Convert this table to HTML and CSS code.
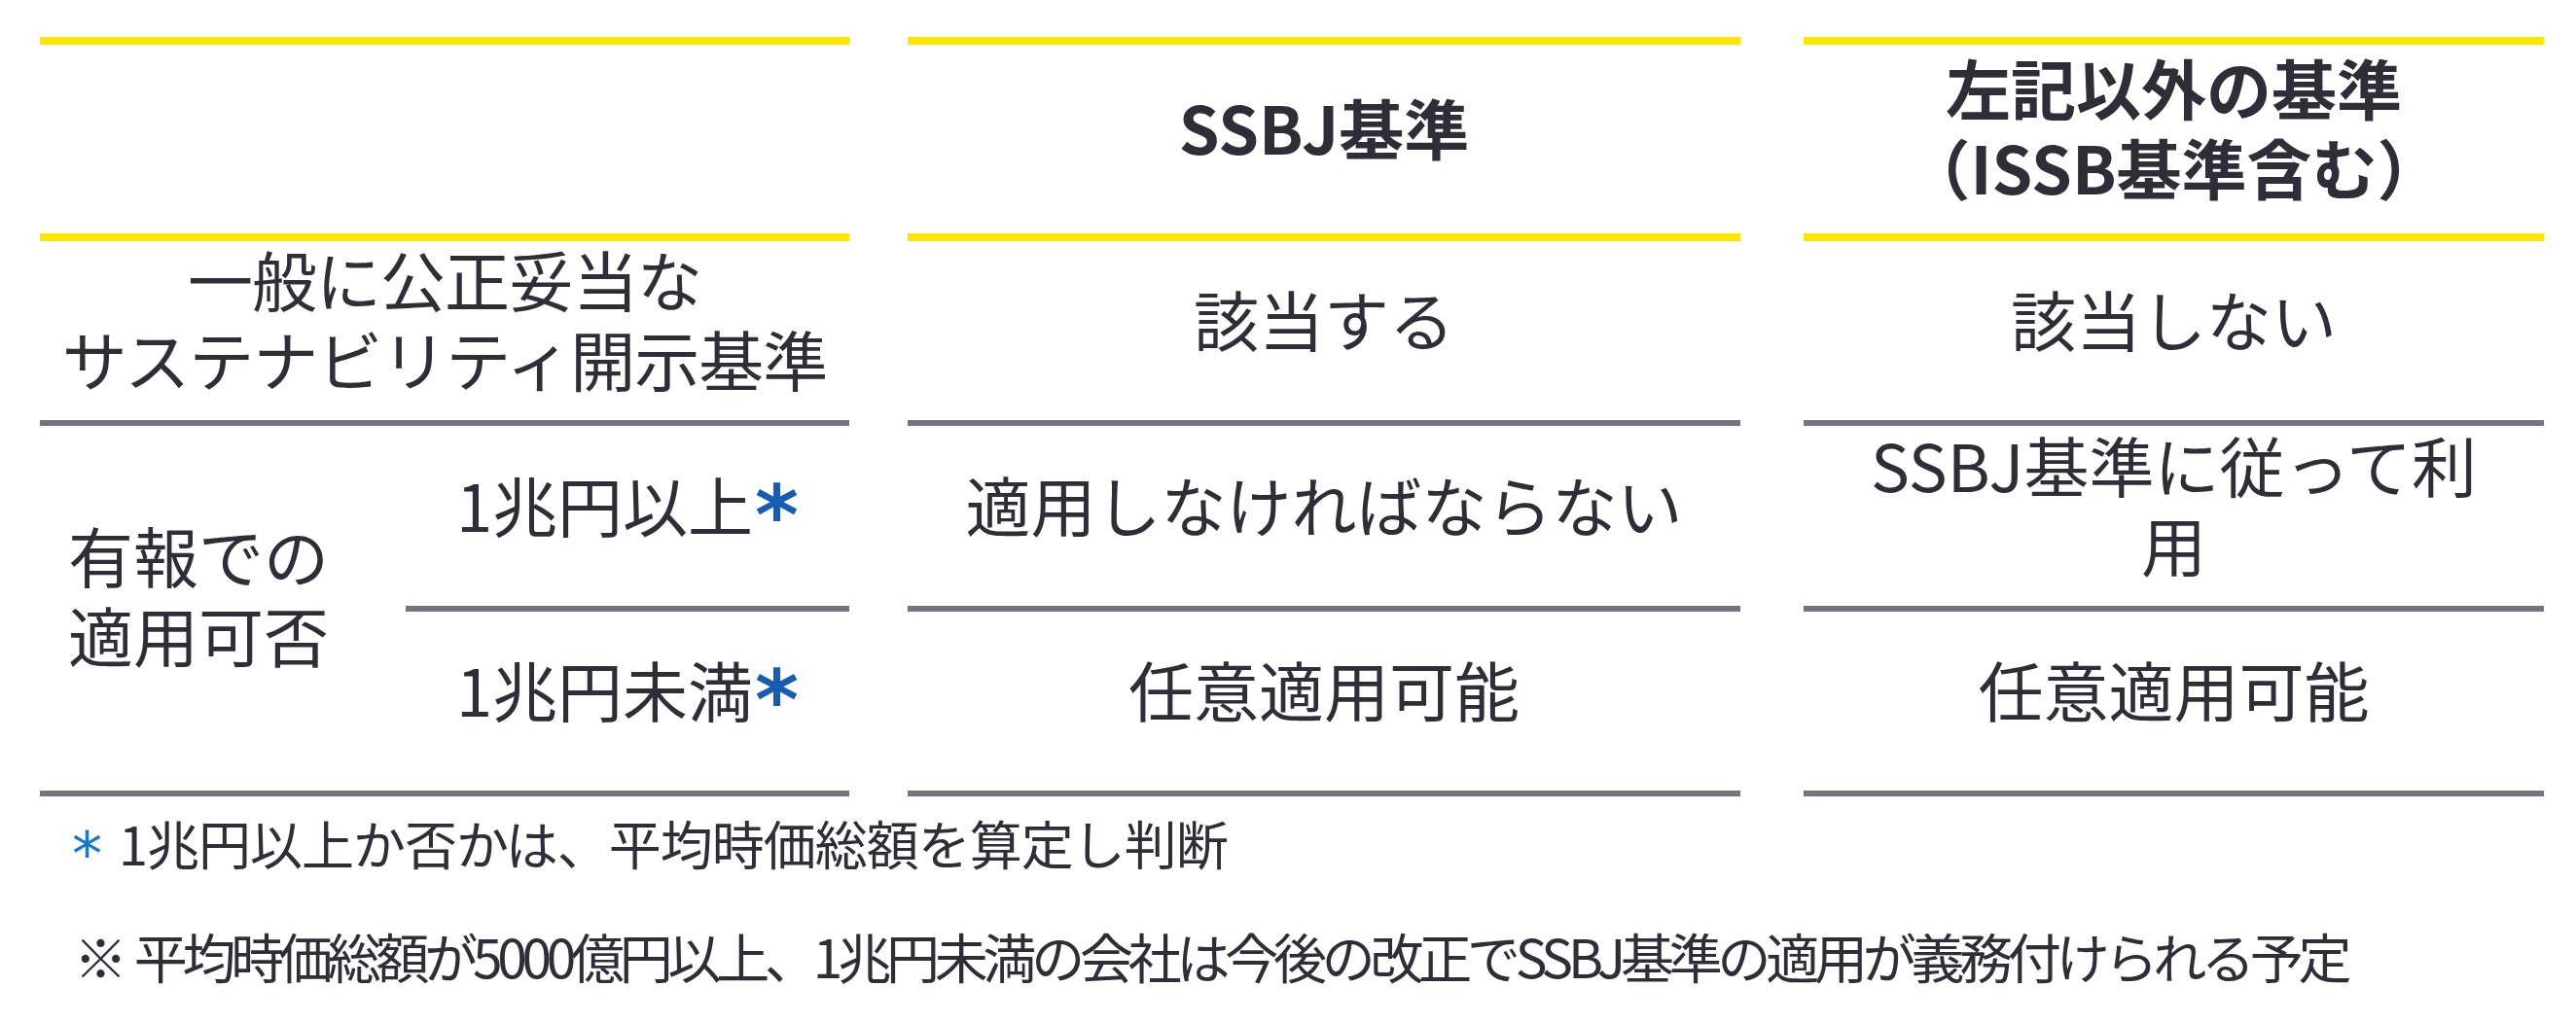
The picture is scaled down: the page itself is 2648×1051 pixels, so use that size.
FILE: index.html
```html
<!DOCTYPE html>
<html lang="ja">
<head>
<meta charset="utf-8">
<title>SSBJ基準</title>
<link rel="stylesheet" href="styles.css">
</head>
<body>
<div class="page">
  <div class="table">
    <div class="col col1">
      <div class="cell head"></div>
      <div class="cell r2"><p class="txt tight">一般に公正妥当な<br>サステナビリティ開示基準</p></div>
      <div class="split">
        <div class="label"><p class="txt">有報での<br>適用可否</p></div>
        <div class="sub">
          <div class="cell r3a"><p class="txt">1兆円以上<span class="ast">*</span></p></div>
          <div class="cell r3b last"><p class="txt">1兆円未満<span class="ast">*</span></p></div>
        </div>
      </div>
    </div>
    <div class="col col2">
      <div class="cell head"><p class="txt bold">SSBJ基準</p></div>
      <div class="cell r2"><p class="txt">該当する</p></div>
      <div class="cell r3a"><p class="txt">適用しなければならない</p></div>
      <div class="cell r3b"><p class="txt">任意適用可能</p></div>
    </div>
    <div class="col col3">
      <div class="cell head"><p class="txt bold">左記以外の基準<br>（ISSB基準含む）</p></div>
      <div class="cell r2"><p class="txt">該当しない</p></div>
      <div class="cell r3a"><p class="txt">SSBJ基準に従って利<br>用</p></div>
      <div class="cell r3b"><p class="txt">任意適用可能</p></div>
    </div>
  </div>
  <div class="notes">
    <p class="fn fn1"><span class="ast2">*</span>1兆円以上か否かは、平均時価総額を算定し判断</p>
    <p class="fn fn2"><span class="kome">※</span>平均時価総額が5000億円以上、1兆円未満の会社は今後の改正でSSBJ基準の適用が義務付けられる予定</p>
  </div>
</div>
</body>
</html>
```
FILE: styles.css
```css
* {
  box-sizing: border-box;
  margin: 0;
  padding: 0;
}

html, body {
  margin: 0;
  background: #ffffff;
}

body {
  font-family: "Noto Sans CJK JP", "Noto Sans", sans-serif;
  color: #2e2e38;
}

.page {
  width: 2648px;
  height: 1051px;
  padding: 38px 0 0 41px;
  overflow: hidden;
}

.table {
  display: flex;
  align-items: flex-start;
}

.col {
  display: flex;
  flex-direction: column;
}

.col1 { width: 832px; }
.col2 { width: 856px; margin-left: 60px; }
.col3 { width: 761px; margin-left: 65px; }

.cell {
  display: flex;
  align-items: center;
  justify-content: center;
  text-align: center;
  padding-bottom: 26px;
}

.head {
  height: 210px;
  border-top: 8px solid #ffe600;
  border-bottom: 8px solid #ffe600;
}

.r2 {
  height: 190px;
  border-bottom: 6px solid #747480;
}

.r3a {
  height: 191px;
  border-bottom: 6px solid #747480;
}

.r3b {
  height: 190px;
  border-bottom: 6px solid #747480;
}

.r3b.last {
  height: 184px;
  border-bottom: none;
}

.split {
  display: flex;
  border-bottom: 6px solid #747480;
}

.label {
  width: 376px;
  display: flex;
  align-items: center;
  padding-left: 29px;
  padding-bottom: 30px;
  text-align: left;
}

.sub {
  flex: 1;
  display: flex;
  flex-direction: column;
}

.txt {
  font-size: 67px;
  line-height: 1.22;
  white-space: nowrap;
  font-weight: 400;
}

.txt.tight {
  letter-spacing: -1px;
}

.txt.bold {
  font-weight: 700;
}

.ast {
  font-family: "DejaVu Sans", sans-serif;
  font-weight: 700;
  font-size: 86px;
  line-height: 0;
  color: #155cb4;
  margin-left: 2px;
  vertical-align: -13px;
}

.notes {
  padding-left: 33px;
}

.fn {
  white-space: nowrap;
  color: #2e2e38;
}

.fn1 {
  font-size: 54px;
  line-height: 65px;
  margin-top: 15px;
  letter-spacing: -1px;
}

.ast2 {
  font-family: "DejaVu Sans", sans-serif;
  font-size: 62px;
  line-height: 0;
  color: #1777cf;
  margin-right: 18px;
  vertical-align: -10px;
}

.fn2 {
  font-size: 55px;
  line-height: 66px;
  margin-top: 50px;
  letter-spacing: -5.25px;
  padding-left: 2px;
}

.kome {
  margin-right: 12px;
}
```
